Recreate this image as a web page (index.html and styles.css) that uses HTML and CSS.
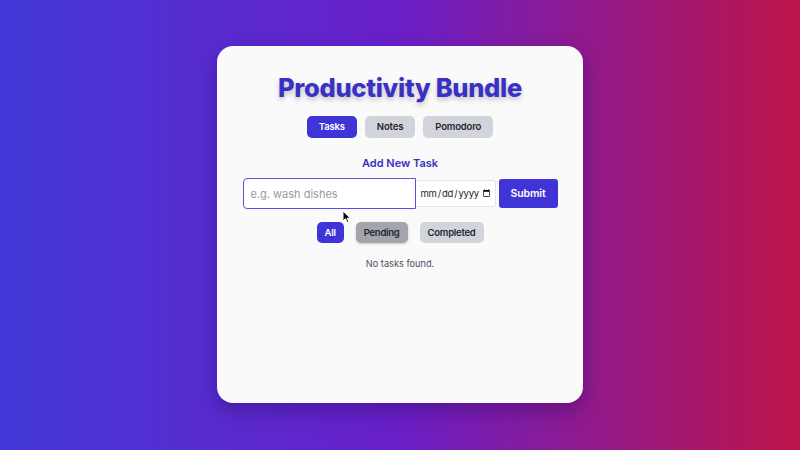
FILE: index.html
```html
<!DOCTYPE html>
<html lang="en">
<head>
<meta charset="utf-8">
<title>Productivity Bundle</title>
<link rel="stylesheet" href="styles.css">
</head>
<body>
<main class="card">
  <h1 class="title">Productivity Bundle</h1>
  <nav class="tabs">
    <button class="btn btn-primary">Tasks</button>
    <button class="btn btn-gray">Notes</button>
    <button class="btn btn-gray">Pomodoro</button>
  </nav>
  <h2 class="section-title">Add New Task</h2>
  <form class="task-form">
    <input class="task-input" type="text" placeholder="e.g. wash dishes">
    <input class="date-input" type="date">
    <button type="button" class="submit">Submit</button>
  </form>
  <div class="filters">
    <button class="btn btn-primary">All</button>
    <button class="btn btn-hover">Pending</button>
    <button class="btn btn-gray">Completed</button>
  </div>
  <p class="empty">No tasks found.</p>
  <svg class="cursor" width="10" height="14" viewBox="0 0 10 14"><path d="M1 1 L1 11 L3.5 8.7 L5.2 12.5 L6.8 11.8 L5.1 8.2 L8.4 8.2 Z" fill="#000" stroke="#fff" stroke-width="1"/></svg>
</main>
</body>
</html>
```
FILE: styles.css
```css
* { box-sizing: border-box; }
html, body { margin: 0; height: 100%; }
body {
  font-family: Inter, "Noto Sans", sans-serif;
  background: linear-gradient(to right, #4339d8 0%, #6a1fc8 50%, #bd1449 100%);
  display: flex;
  align-items: center;
  justify-content: center;
}
.card {
  position: relative;
  width: 366px;
  height: 357px;
  margin-top: -1px;
  background: #fafafb;
  border-radius: 16px;
  box-shadow: 0 8px 20px rgba(30, 10, 80, 0.35);
  padding-top: 24px;
  display: flex;
  flex-direction: column;
  align-items: center;
}
.title {
  margin: 0;
  font-size: 25.5px;
  line-height: 36px;
  font-weight: 800;
  color: #3a31c4;
  letter-spacing: -0.3px;
  text-shadow: 0 3px 5px rgba(0, 0, 0, 0.22);
}
.tabs {
  margin-top: 10px;
  display: flex;
  gap: 8px;
}
.btn {
  border: none;
  border-radius: 5px;
  font-family: inherit;
  font-size: 9.5px;
  font-weight: 600;
  letter-spacing: -0.15px;
  line-height: 14px;
  padding: 4px 12px;
  height: 22px;
}
.btn-primary { background: #4034d6; color: #fff; }
.btn-gray { background: #d1d4da; color: #1f2430; }
.btn-hover { background: #a4a4ab; color: #1f2430; box-shadow: 0 1px 3px rgba(0,0,0,0.2); }
.section-title {
  margin: 16px 0 0;
  font-size: 11px;
  line-height: 18px;
  font-weight: 600;
  color: #3a31c4;
}
.task-form {
  margin: 6px 0 0;
  display: flex;
  align-items: center;
}
.task-input {
  width: 173px;
  height: 31px;
  border: 1.5px solid #5a50e6;
  border-radius: 4px 0 0 4px;
  padding: 0 7px;
  font-family: inherit;
  font-size: 11px;
  background: #fff;
  outline: none;
}
.task-input::placeholder { color: #9a9aa3; }
.date-input {
  width: 80px;
  height: 27px;
  border: 1px solid #e2e3e8;
  border-left: none;
  border-radius: 0 3px 3px 0;
  padding: 0 4px 0 4px;
  font-family: inherit;
  font-size: 9.5px;
  letter-spacing: -0.2px;
  color: #222;
  background: #fff;
}
.date-input::-webkit-calendar-picker-indicator {
  margin: 0;
  padding: 0;
  width: 9px;
  height: 9px;
}
.submit {
  margin-left: 3px;
  width: 59px;
  height: 29px;
  border: none;
  border-radius: 3px;
  background: #4034d6;
  color: #fff;
  font-family: inherit;
  font-size: 10.5px;
  letter-spacing: -0.1px;
  font-weight: 600;
}
.filters {
  margin-top: 13px;
  display: flex;
  gap: 12px;
}
.filters .btn { height: 21px; padding: 3px 8px; letter-spacing: -0.25px; }
.empty {
  margin: 13px 0 0;
  font-size: 9.2px;
  line-height: 16px;
  color: #4b4f5a;
}
.cursor {
  position: absolute;
  left: 125px;
  top: 164px;
}
```
